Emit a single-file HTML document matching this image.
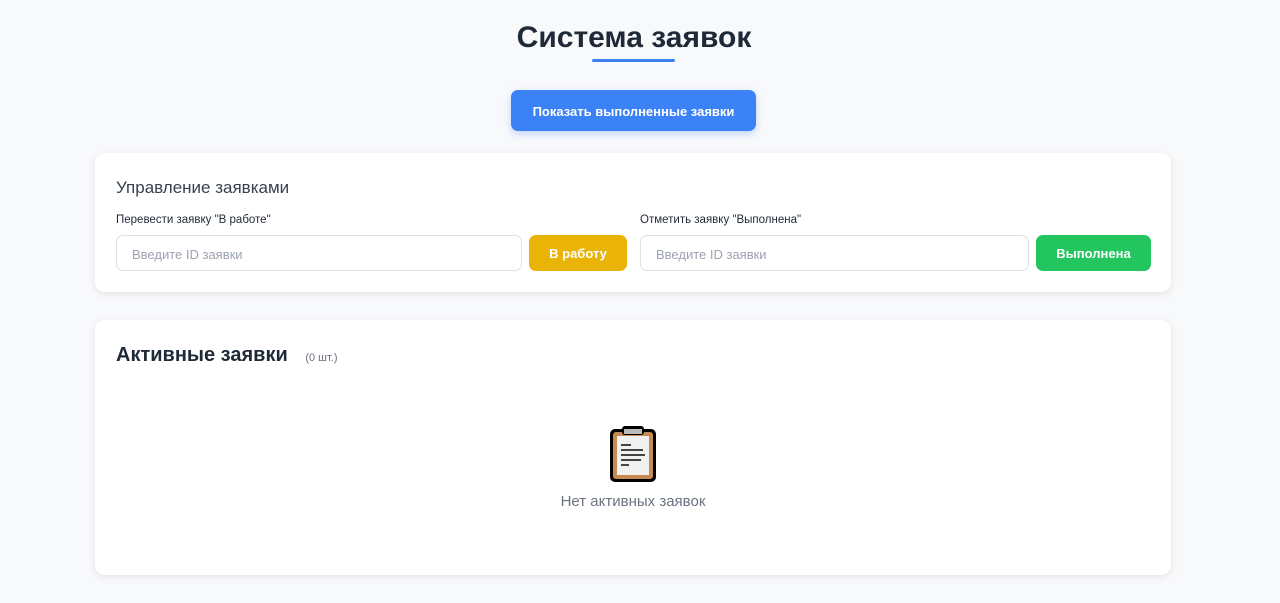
<!DOCTYPE html>
<html><head><meta charset="utf-8"><style>
*{box-sizing:border-box;margin:0;padding:0}
body{width:1280px;height:603px;background:#f8f9fb;font-family:"Liberation Sans","DejaVu Sans",sans-serif;color:#1f2937;position:relative;overflow:hidden}
h1{position:absolute;top:21px;left:0;width:1268px;text-align:center;font-size:30px;font-weight:bold;color:#1f2937}
.ul{position:absolute;left:592px;top:59px;width:83px;height:3px;background:#3b82f6;border-radius:2px}
.top{position:absolute;left:511px;top:90px;width:245px;height:41px;background:#3b82f6;color:#fff;border-radius:7px;font-size:13px;font-weight:bold;text-align:center;line-height:43px;box-shadow:0 3px 8px rgba(59,130,246,.3)}
.card{position:absolute;left:95px;width:1076px;background:#fff;border-radius:10px;box-shadow:0 2px 8px rgba(0,0,0,.09)}
.c1{top:153px;height:139px}.c2{top:320px;height:255px}
.t{position:absolute;left:21px;top:25px;font-size:17px;color:#374151}
.lb{position:absolute;top:61px;font-size:11.5px;color:#1f2937}
.in{position:absolute;top:82px;height:36px;border:1px solid #dde1e6;border-radius:7px;font-size:13px;color:#9ca3af;padding-left:15px;line-height:37px}
.bt{position:absolute;top:82px;height:36px;border-radius:7px;color:#fff;font-weight:bold;font-size:13px;text-align:center;line-height:38px}
</style></head><body>
<h1>Система заявок</h1><div class="ul"></div>
<div class="top">Показать выполненные заявки</div>
<div class="card c1">
<div class="t">Управление заявками</div>
<div class="lb" style="left:21px">Перевести заявку "В работе"</div>
<div class="in" style="left:21px;width:406px">Введите ID заявки</div>
<div class="bt" style="left:434px;width:98px;background:#eab308">В работу</div>
<div class="lb" style="left:545px">Отметить заявку "Выполнена"</div>
<div class="in" style="left:545px;width:389px">Введите ID заявки</div>
<div class="bt" style="left:941px;width:115px;background:#22c55e">Выполнена</div>
</div>
<div class="card c2">
<div style="position:absolute;left:21px;top:24px;font-size:20px;font-weight:bold;color:#1f2937">Активные заявки <span style="font-size:11px;font-weight:normal;color:#6b7280;margin-left:12px">(0 шт.)</span></div>
<svg style="position:absolute;left:513px;top:104px" width="50" height="60" viewBox="0 0 50 60">
<rect x="2" y="5" width="46" height="53" rx="5" fill="#000"/>
<rect x="5" y="8" width="40" height="47" rx="3" fill="#c68a52"/>
<rect x="9" y="12" width="32" height="39" fill="#f1f1f1"/>
<rect x="14" y="2" width="22" height="9" rx="3" fill="#000"/><rect x="16" y="5" width="18" height="5" fill="#bbb"/>
<g fill="#444"><rect x="13" y="20" width="10" height="2"/><rect x="13" y="25" width="22" height="2"/><rect x="13" y="30" width="24" height="2"/><rect x="13" y="35" width="20" height="2"/><rect x="13" y="40" width="8" height="2"/></g>
</svg>
<div style="position:absolute;left:0;width:1076px;top:173px;text-align:center;font-size:15px;color:#6b7280">Нет активных заявок</div>
</div>
</body></html>
